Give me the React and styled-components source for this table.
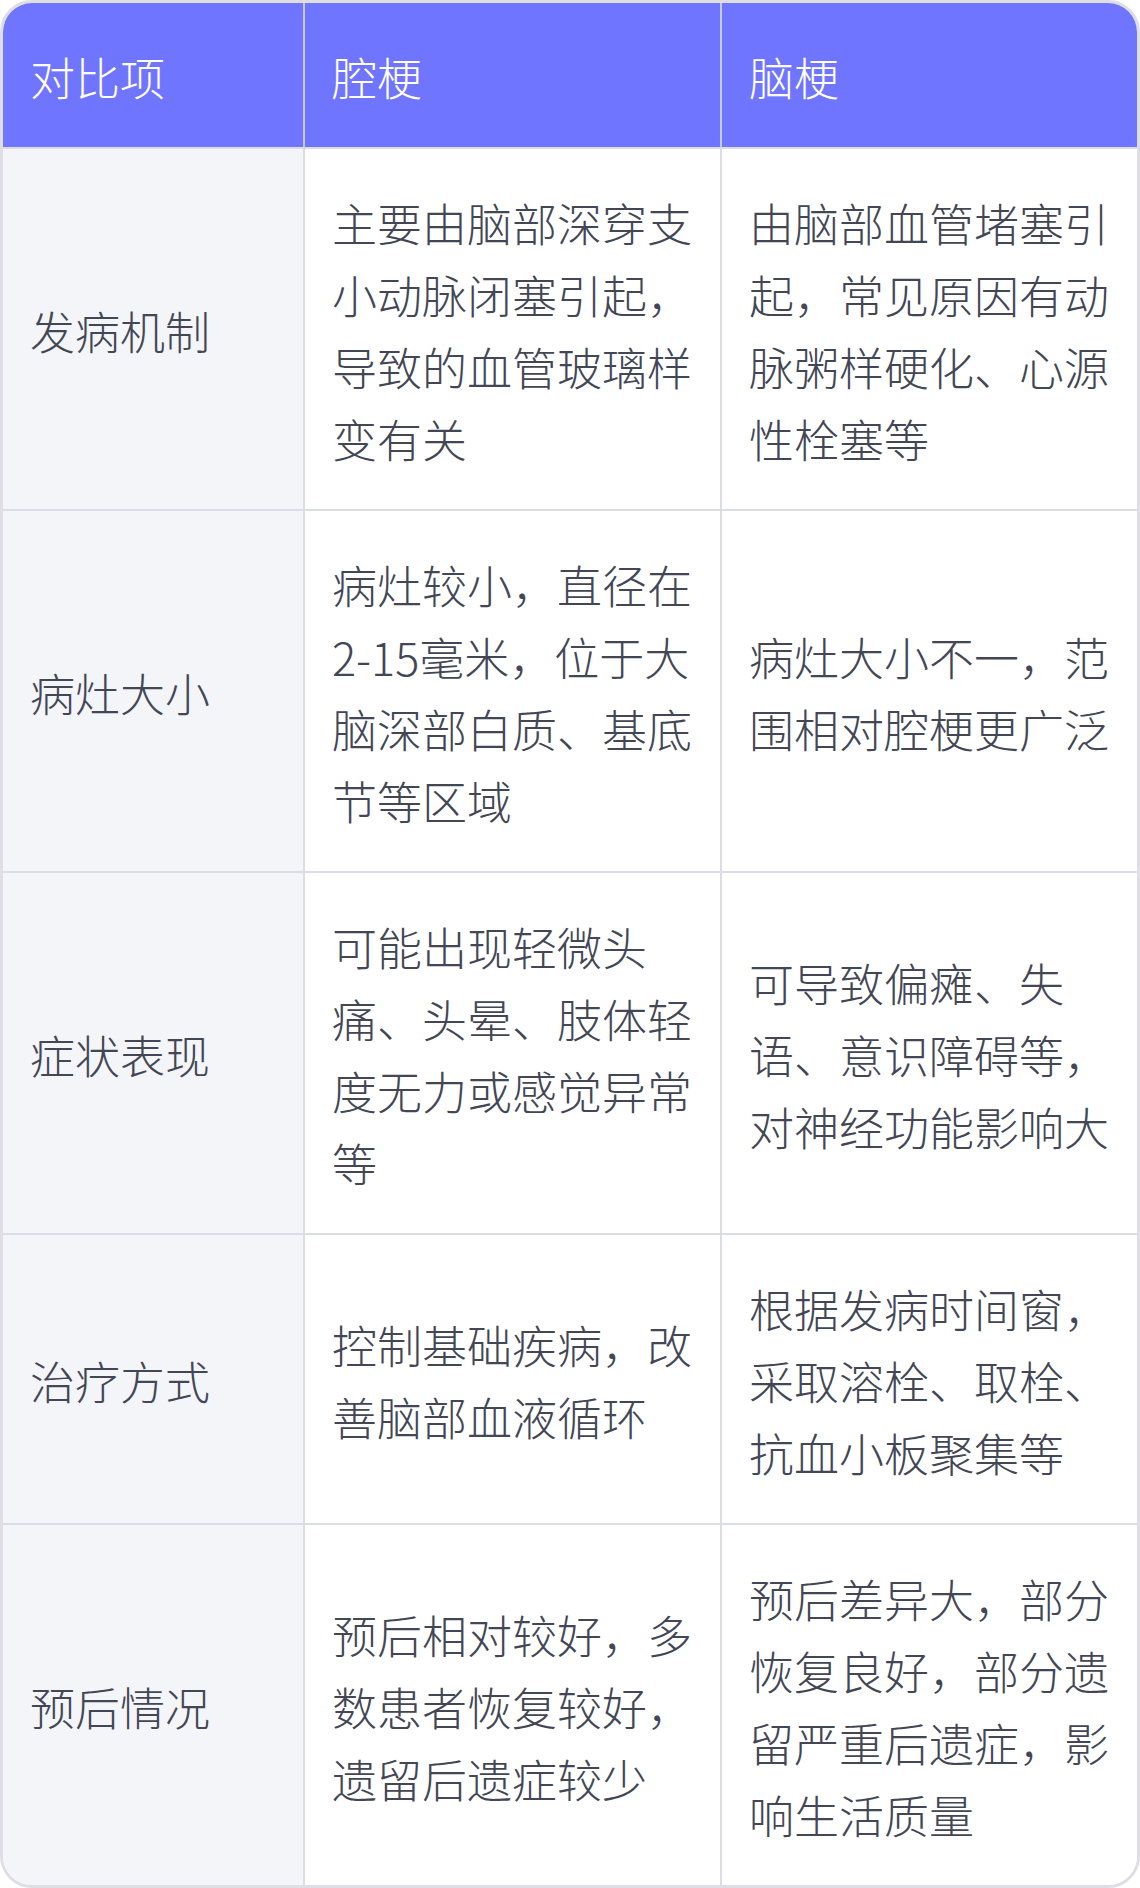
import React from 'react'
import styled, { createGlobalStyle } from 'styled-components'

const rows = [
    {
        item: '发病机制',
        lacunar: '主要由脑部深穿支小动脉闭塞引起，导致的血管玻璃样变有关',
        cerebral: '由脑部血管堵塞引起，常见原因有动脉粥样硬化、心源性栓塞等'
    },
    {
        item: '病灶大小',
        lacunar: '病灶较小，直径在2-15毫米，位于大脑深部白质、基底节等区域',
        cerebral: '病灶大小不一，范围相对腔梗更广泛'
    },
    {
        item: '症状表现',
        lacunar: '可能出现轻微头痛、头晕、肢体轻度无力或感觉异常等',
        cerebral: '可导致偏瘫、失语、意识障碍等，对神经功能影响大'
    },
    {
        item: '治疗方式',
        lacunar: '控制基础疾病，改善脑部血液循环',
        cerebral: '根据发病时间窗，采取溶栓、取栓、抗血小板聚集等'
    },
    {
        item: '预后情况',
        lacunar: '预后相对较好，多数患者恢复较好，遗留后遗症较少',
        cerebral: '预后差异大，部分恢复良好，部分遗留严重后遗症，影响生活质量'
    }
]

export default function App() {
    return (
        <>
            <GlobalStyle />
            <Table>
                <HeadCell>对比项</HeadCell>
                <HeadCell>腔梗</HeadCell>
                <HeadCell $last>脑梗</HeadCell>
                {rows.map((row, i) => {
                    const bottom = i === rows.length - 1
                    return (
                        <React.Fragment key={row.item}>
                            <Cell $label $bottom={bottom}>{row.item}</Cell>
                            <Cell $bottom={bottom}>{row.lacunar}</Cell>
                            <Cell $bottom={bottom} $last>{row.cerebral}</Cell>
                        </React.Fragment>
                    )
                })}
            </Table>
        </>
    )
}

const GlobalStyle = createGlobalStyle`
    body {
        margin: 0;
        background: #ffffff;
        font-family: "Noto Sans CJK SC", "Noto Sans", sans-serif;
    }
`

const Table = styled.div`
    display: grid;
    grid-template-columns: 302px 417px 415px;
    width: 1140px;
    box-sizing: border-box;
    border: 3px solid #dedee4;
    border-radius: 32px;
    overflow: hidden;
    background: #ffffff;
`

const HeadCell = styled.div`
    display: flex;
    align-items: center;
    padding: 38px 27px 34px;
    background: #7075ff;
    color: #ffffff;
    font-size: 45px;
    font-weight: 300;
    line-height: 72px;
    border-bottom: 2px solid #dcdce3;
    border-right: ${p => (p.$last ? 'none' : '2px solid #c9cbf7')};
`

const Cell = styled.div`
    display: flex;
    align-items: center;
    padding: 38px 27px 34px;
    background: ${p => (p.$label ? '#f4f5f9' : '#ffffff')};
    color: #424655;
    font-size: 45px;
    font-weight: 300;
    line-height: 72px;
    word-break: break-all;
    border-bottom: ${p => (p.$bottom ? 'none' : '2px solid #dcdce3')};
    border-right: ${p => (p.$last ? 'none' : '2px solid #dcdce3')};
`
